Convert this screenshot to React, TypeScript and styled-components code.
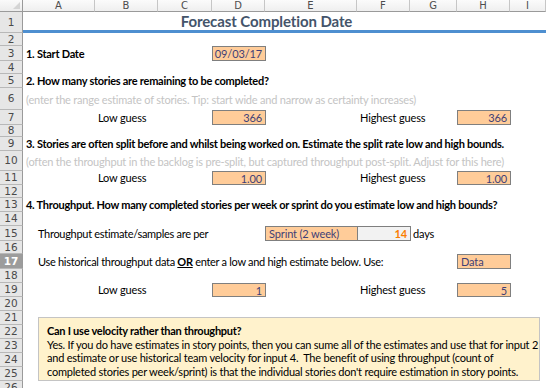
import styled, { createGlobalStyle } from "styled-components";

const colWidths = [72, 63, 54, 53, 92, 53, 47, 53, 36];
const colNames = ["A", "B", "C", "D", "E", "F", "G", "H", "I"];
const rowHeights = [21, 13, 15, 13, 14, 22, 15, 12, 14, 20, 14, 13, 14, 14, 15, 13, 15, 14, 14, 14, 14, 14, 14, 14, 14, 14];
const selectedRow = 17;

const GlobalStyle = createGlobalStyle`
  html, body {
    margin: 0;
    padding: 0;
    background: #fff;
    overflow: hidden;
  }
`;

const Sheet = styled.div`
  display: grid;
  grid-template-columns: 23px ${colWidths.map((w) => `${w}px`).join(" ")};
  grid-template-rows: 12px ${rowHeights.map((h) => `${h}px`).join(" ")};
  width: 546px;
  height: 388px;
  overflow: hidden;
  font-family: Lato, "Liberation Sans", sans-serif;
  font-size: 11px;
  letter-spacing: -0.13px;
  color: #000;
`;

const Corner = styled.div`
  grid-row: 1;
  grid-column: 1;
  background: linear-gradient(#fafafa, #ececec);
  border-right: 1px solid #9a9a9a;
  border-bottom: 1px solid #9a9a9a;
  box-sizing: border-box;
  position: relative;
  &::after {
    content: "";
    position: absolute;
    right: 2px;
    bottom: 2px;
    border-left: 7px solid transparent;
    border-bottom: 7px solid #d4d4d4;
  }
`;

const ColHead = styled.div<{ $col: number }>`
  grid-row: 1;
  grid-column: ${(p) => p.$col + 1};
  display: flex;
  align-items: center;
  justify-content: center;
  background: linear-gradient(#fbfbfb, #efefef);
  border-right: 1px solid #c6c6c6;
  border-bottom: 1px solid #9a9a9a;
  box-sizing: border-box;
  font-family: "DejaVu Sans", sans-serif;
  font-size: 10px;
  letter-spacing: 0;
  color: #4d4d4d;
  line-height: 1;
`;

const RowHead = styled.div<{ $row: number; $selected?: boolean }>`
  grid-row: ${(p) => p.$row + 1};
  grid-column: 1;
  display: flex;
  align-items: center;
  justify-content: center;
  background: ${(p) => (p.$selected ? "#9c9c9c" : "#e6e6e6")};
  border-right: 1px solid #9a9a9a;
  border-bottom: 1px solid #b8b8b8;
  box-sizing: border-box;
  font-family: "DejaVu Sans", sans-serif;
  font-size: 10.5px;
  letter-spacing: 0;
  font-weight: ${(p) => (p.$selected ? 700 : 400)};
  color: ${(p) => (p.$selected ? "#fff" : "#4a4a4a")};
  line-height: 1;
`;

const TitleBar = styled.div`
  grid-row: 2;
  grid-column: 2 / -1;
  border-bottom: 3px solid #4e8fd0;
  box-sizing: border-box;
  display: flex;
  align-items: center;
`;

const Title = styled.h1`
  margin: 0;
  width: ${colWidths.slice(0, 8).reduce((a, b) => a + b, 0)}px;
  text-align: center;
  font-size: 15px;
  font-weight: 700;
  letter-spacing: -0.1px;
  color: #44546a;
  line-height: 1;
`;

const Cell = styled.div<{
  $row: number;
  $col: number;
  $span?: number;
  $bold?: boolean;
  $hint?: boolean;
  $indent?: number;
}>`
  grid-row: ${(p) => p.$row + 1};
  grid-column: ${(p) => p.$col + 1} / span ${(p) => p.$span ?? 1};
  display: flex;
  align-items: ${(p) => (p.$hint ? "center" : "flex-end")};
  padding: 0 0 ${(p) => (p.$hint ? 0 : 1)}px ${(p) => 3 + (p.$indent ?? 0)}px;
  white-space: nowrap;
  font-weight: ${(p) => (p.$bold ? 700 : 400)};
  letter-spacing: ${(p) => (p.$bold ? -0.26 : p.$hint ? -0.2 : p.$indent ? -0.3 : -0.15)}px;
  color: ${(p) => (p.$hint ? "#c4c4c4" : "#000")};
  line-height: 13px;
  u {
    font-weight: 700;
  }
`;

const InputBox = styled.div<{
  $row: number;
  $col: number;
  $calc?: boolean;
  $left?: boolean;
}>`
  grid-row: ${(p) => p.$row + 1};
  grid-column: ${(p) => p.$col + 1};
  display: flex;
  align-items: center;
  justify-content: ${(p) => (p.$left ? "flex-start" : "flex-end")};
  padding: 0 3px;
  background: ${(p) => (p.$calc ? "#f2f2f2" : "#ffcc99")};
  border: 1px solid #7f7f7f;
  margin-right: -1px;
  box-sizing: border-box;
  color: ${(p) => (p.$calc ? "#fa7d00" : "#3f3f76")};
  font-weight: ${(p) => (p.$calc ? 700 : 400)};
  line-height: 1;
`;

const Note = styled.div`
  grid-row: 22 / 27;
  grid-column: 2 / -1;
  margin: 6px 6px 0 15px;
  padding: 6px 8px 0;
  background: #fff2cc;
  border: 1px solid #c4c4c4;
  box-sizing: border-box;
  line-height: 13.6px;
  letter-spacing: -0.22px;
  p {
    margin: 0;
    white-space: nowrap;
  }
  b {
    font-weight: 700;
    letter-spacing: -0.26px;
  }
`;

const guessRows: { row: number; low: string; high: string }[] = [
  { row: 7, low: "366", high: "366" },
  { row: 11, low: "1.00", high: "1.00" },
  { row: 19, low: "1", high: "5" },
];

export default function App() {
  return (
    <>
      <GlobalStyle />
      <Sheet>
        <Corner />
        {colNames.map((name, i) => (
          <ColHead key={name} $col={i + 1}>
            {name}
          </ColHead>
        ))}
        {rowHeights.map((_, i) => (
          <RowHead key={i} $row={i + 1} $selected={i + 1 === selectedRow}>
            {i + 1}
          </RowHead>
        ))}

        <TitleBar>
          <Title>Forecast Completion Date</Title>
        </TitleBar>

        <Cell $row={3} $col={1} $span={3} $bold>
          1. Start Date
        </Cell>
        <InputBox $row={3} $col={4}>09/03/17</InputBox>

        <Cell $row={5} $col={1} $span={9} $bold>
          2. How many stories are remaining to be completed?
        </Cell>
        <Cell $row={6} $col={1} $span={9} $hint>
          (enter the range estimate of stories. Tip: start wide and narrow as certainty increases)
        </Cell>

        <Cell $row={9} $col={1} $span={9} $bold>
          3. Stories are often split before and whilst being worked on. Estimate the split rate low and high bounds.
        </Cell>
        <Cell $row={10} $col={1} $span={9} $hint>
          (often the throughput in the backlog is pre-split, but captured throughput post-split. Adjust for this here)
        </Cell>

        <Cell $row={13} $col={1} $span={9} $bold>
          4. Throughput. How many completed stories per week or sprint do you estimate low and high bounds?
        </Cell>

        <Cell $row={15} $col={1} $span={4} $indent={12}>
          Throughput estimate/samples are per
        </Cell>
        <InputBox $row={15} $col={5} $left>
          Sprint (2 week)
        </InputBox>
        <InputBox $row={15} $col={6} $calc>
          14
        </InputBox>
        <Cell $row={15} $col={7}>days</Cell>

        <Cell $row={17} $col={1} $span={7} $indent={12}>
          Use historical throughput data&nbsp;<u>OR</u>&nbsp;enter a low and high estimate below. Use:
        </Cell>
        <InputBox $row={17} $col={8} $left>
          Data
        </InputBox>

        {guessRows.map((g) => (
          <>
            <Cell key={`l${g.row}`} $row={g.row} $col={2}>
              Low guess
            </Cell>
            <InputBox key={`lv${g.row}`} $row={g.row} $col={4}>
              {g.low}
            </InputBox>
            <Cell key={`h${g.row}`} $row={g.row} $col={6}>
              Highest guess
            </Cell>
            <InputBox key={`hv${g.row}`} $row={g.row} $col={8}>
              {g.high}
            </InputBox>
          </>
        ))}

        <Note>
          <p>
            <b>Can I use velocity rather than throughput?</b>
          </p>
          <p>
            Yes. If you do have estimates in story points, then you can sume all of the estimates and use that for input 2
          </p>
          <p>
            and estimate or use historical team velocity for input 4.&nbsp; The benefit of using throughput (count of
          </p>
          <p>
            completed stories per week/sprint) is that the individual stories don't require estimation in story points.
          </p>
        </Note>
      </Sheet>
    </>
  );
}
